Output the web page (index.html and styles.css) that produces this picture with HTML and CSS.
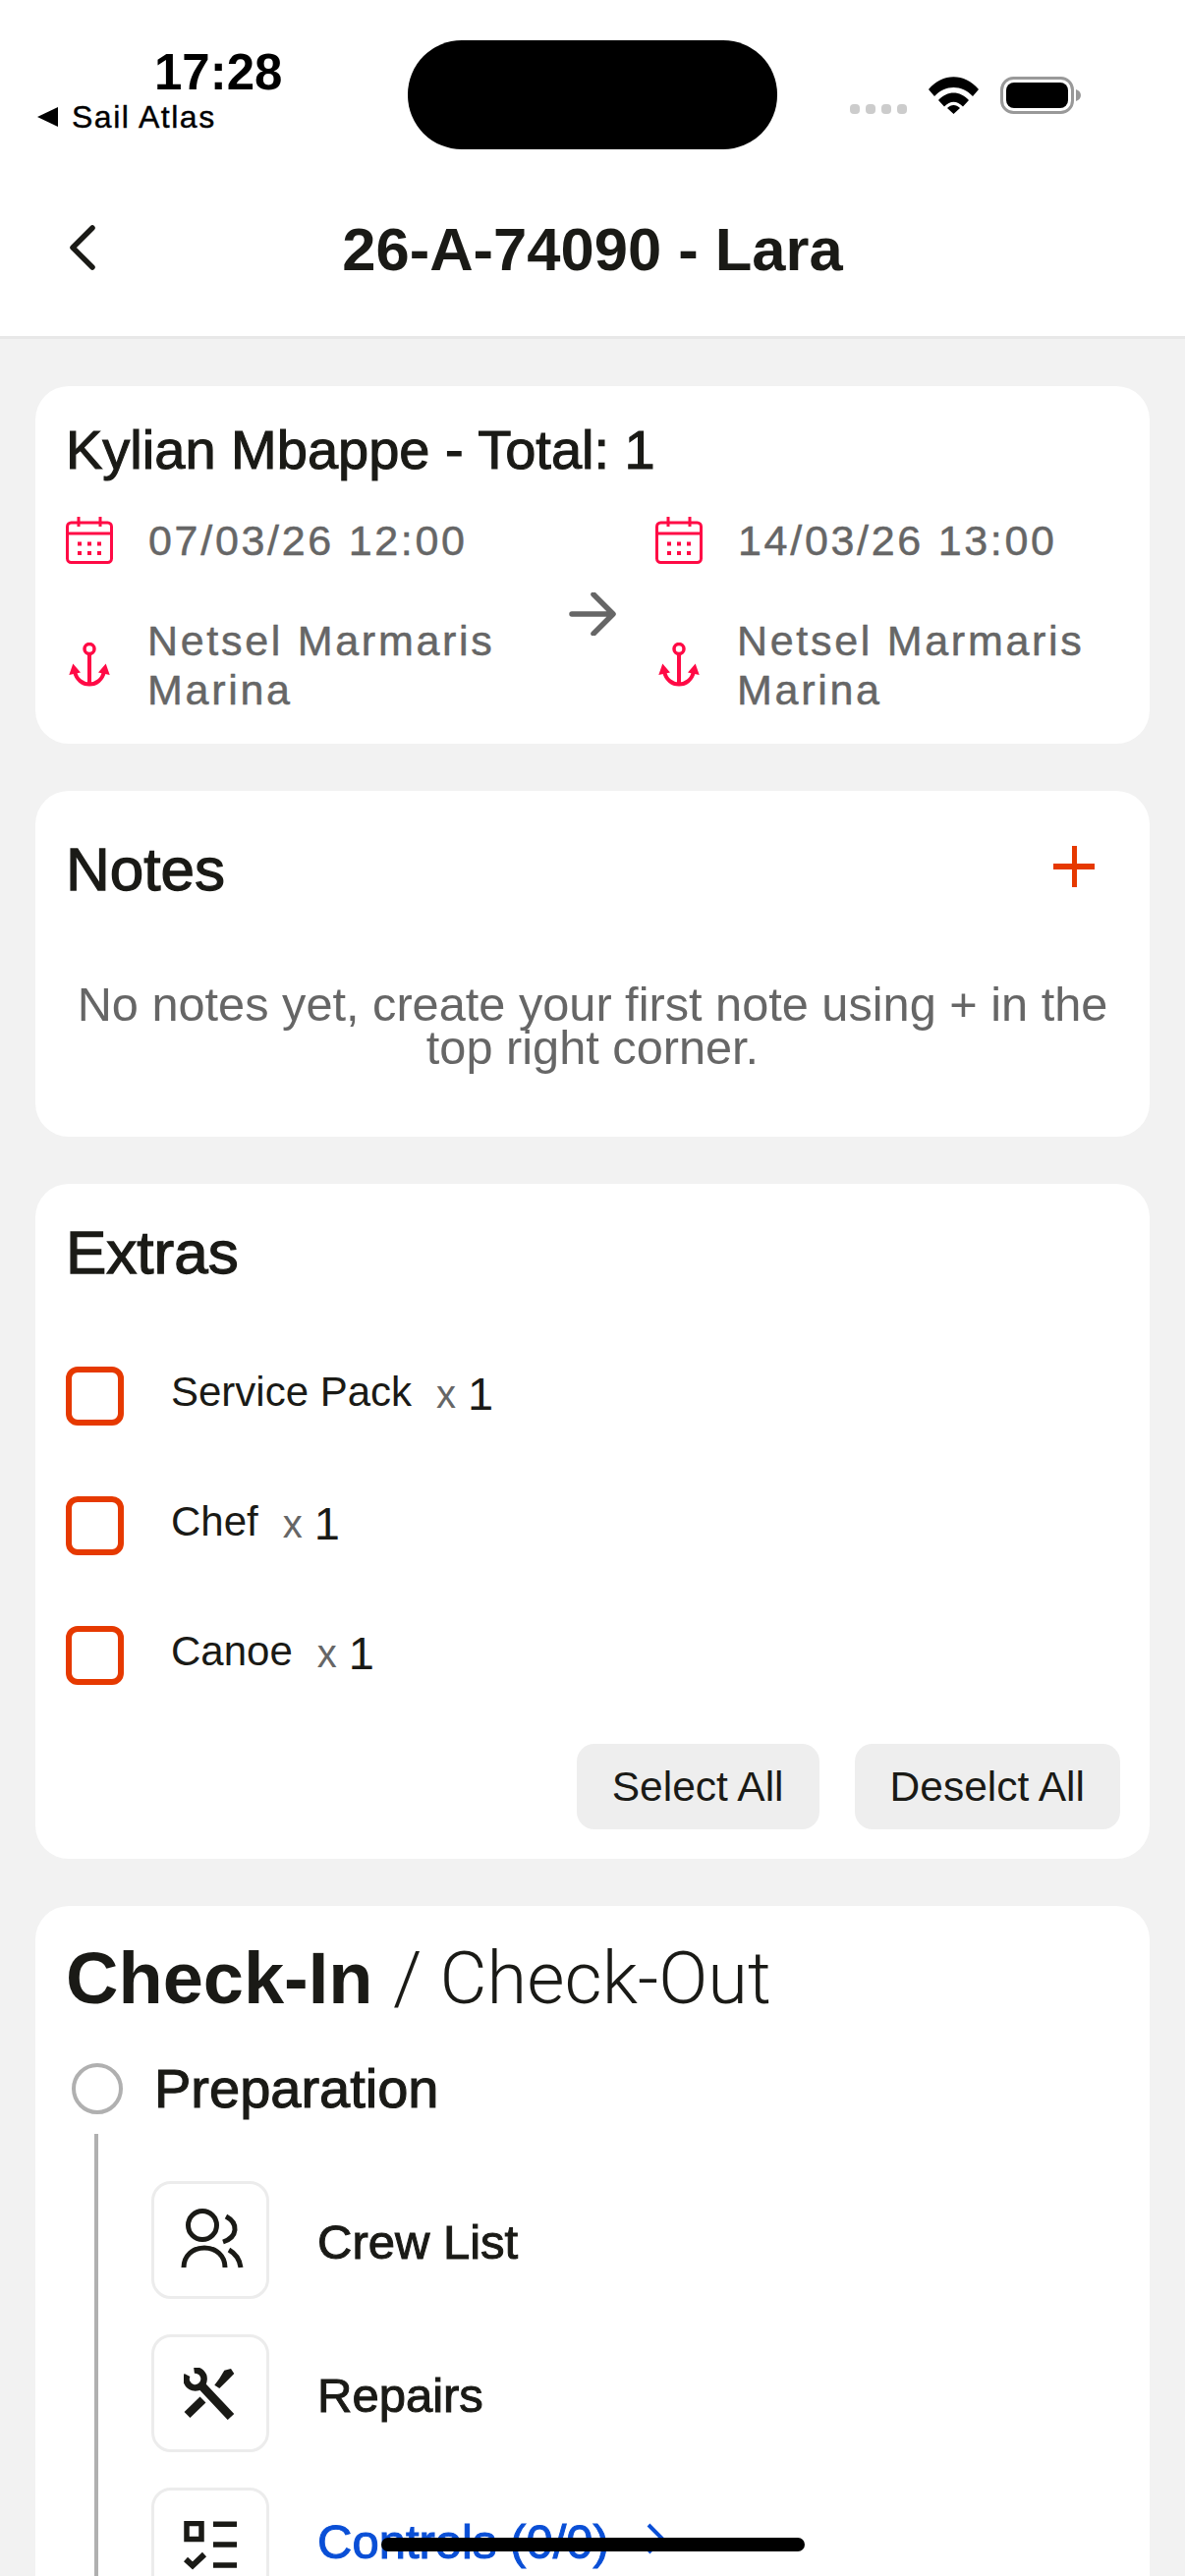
FILE: index.html
```html
<!DOCTYPE html>
<html lang="en">
<head>
    <meta charset="UTF-8">
    <meta name="viewport" content="width=device-width, initial-scale=1.0">
    <title>26-A-74090 - Lara</title>
    <link rel="stylesheet" href="styles.css">
</head>
<body>
    <header class="top">
        <div class="status">
            <div class="status-left">
                <div class="time">17:28</div>
                <div class="back-app"><span class="back-tri"></span>Sail Atlas</div>
            </div>
            <div class="island"></div>
            <div class="status-right">
                <div class="signal"><i></i><i></i><i></i><i></i></div>
                <svg class="wifi" viewBox="0 0 51 38"><path d="M0 13 C14 -4 37 -4 51 13 L45 20 C34 8 17 8 6 20Z M10 24 C19 14 32 14 41 24 L35 30.500 C29 24 22 24 16 30.500Z M19 32 C23 28 28 28 32 32 L25.500 38Z" fill="#000"/></svg>
                <svg class="battery" viewBox="0 0 82 38"><rect x="1.500" y="1.500" width="72" height="35" rx="12" fill="none" stroke="#999" stroke-width="3"/><rect x="6" y="6" width="63" height="26" rx="8" fill="#000"/><path d="M77 13 C80 14 82 16 82 19 C82 22 80 24 77 25Z" fill="#999"/></svg>
            </div>
        </div>
        <div class="nav">
            <svg class="nav-back" viewBox="0 0 27 46"><path d="M24 3 L4 23 L24 43" fill="none" stroke="#1a1a16" stroke-width="5.500" stroke-linecap="round" stroke-linejoin="round"/></svg>
            <h1 class="nav-title">26-A-74090 - Lara</h1>
        </div>
    </header>

    <main class="content">
        <section class="card card-trip">
            <h2 class="trip-title">Kylian Mbappe - Total: 1</h2>
            <div class="trip-grid">
                <div class="trip-col">
                    <div class="trip-row">
                        <svg class="ico-cal" viewBox="0 0 48 48"><use href="#cal"/></svg>
                        <span>07/03/26 12:00</span>
                    </div>
                    <div class="trip-row trip-place">
                        <svg class="ico-anchor" viewBox="0 0 42 46"><use href="#anchor"/></svg>
                        <span>Netsel Marmaris Marina</span>
                    </div>
                </div>
                <svg class="trip-arrow" viewBox="0 0 48 44"><path d="M3 22 H44 M25 2 L45 22 L25 42" fill="none" stroke="#666" stroke-width="5.500" stroke-linecap="round" stroke-linejoin="round"/></svg>
                <div class="trip-col">
                    <div class="trip-row">
                        <svg class="ico-cal" viewBox="0 0 48 48"><use href="#cal"/></svg>
                        <span>14/03/26 13:00</span>
                    </div>
                    <div class="trip-row trip-place">
                        <svg class="ico-anchor" viewBox="0 0 42 46"><use href="#anchor"/></svg>
                        <span>Netsel Marmaris Marina</span>
                    </div>
                </div>
            </div>
        </section>

        <section class="card card-notes">
            <div class="notes-head">
                <h2 class="card-title">Notes</h2>
                <span class="plus"></span>
            </div>
            <p class="notes-empty">No notes yet, create your first note using + in the top right corner.</p>
        </section>

        <section class="card card-extras">
            <h2 class="card-title">Extras</h2>
            <ul class="extras">
                <li class="extra"><span class="check"></span><span class="extra-name">Service Pack</span><span class="extra-x">x</span><span class="extra-n">1</span></li>
                <li class="extra"><span class="check"></span><span class="extra-name">Chef</span><span class="extra-x">x</span><span class="extra-n">1</span></li>
                <li class="extra"><span class="check"></span><span class="extra-name">Canoe</span><span class="extra-x">x</span><span class="extra-n">1</span></li>
            </ul>
            <div class="extras-actions">
                <button class="btn">Select All</button>
                <button class="btn">Deselct All</button>
            </div>
        </section>

        <section class="card card-check">
            <h2 class="check-title"><b>Check-In</b> <span>/ Check-Out</span></h2>
            <div class="step-head">
                <span class="step-dot"></span>
                <span class="step-name">Preparation</span>
            </div>
            <div class="step-items">
                <div class="item">
                    <div class="tile">
                        <svg class="tile-ico" viewBox="-2 -4 68 68" fill="none" stroke="#1a1a16" stroke-width="5"><circle cx="24" cy="15" r="14.500"/><path d="M5 58 C5 46 14 38 26 38 C38 38 47 46 47 58"/><path d="M48 6 C61 13 60 27 45 32"/><path d="M51 40 C58 44 62 50 63 58"/></svg>
                    </div>
                    <span class="item-name">Crew List</span>
                </div>
                <div class="item">
                    <div class="tile">
                        <svg class="tile-ico tile-ico-sm" viewBox="0 0 54 53" fill="none" stroke="#1a1a16"><path d="M3.500 7.500 A9 9 0 1 0 10.500 2.500" stroke-width="6.500"/><path d="M16 16 L48 50" stroke-width="9"/><path d="M3.500 48 L19.500 32.500" stroke-width="8.500"/><path d="M31.300 17.700 L36.300 11 L41.300 2.700 L48 1 L51.300 6 L44.700 12.700 L36.300 21Z" fill="#1a1a16" stroke="none"/></svg>
                    </div>
                    <span class="item-name">Repairs</span>
                </div>
                <div class="item">
                    <div class="tile">
                        <svg class="tile-ico tile-ico-sm" viewBox="0 0 54 53" fill="none" stroke="#1a1a16" stroke-width="5.500"><rect x="3" y="2.500" width="15" height="16"/><path d="M30 3.200 H54 M30 24 H54 M30 45 H54"/><path d="M2 39 L9 45.500 L21 34" stroke-width="6"/></svg>
                    </div>
                    <span class="item-name item-link">Controls (0/0)</span>
                    <svg class="item-chev" viewBox="0 0 18 32"><path d="M2 2 L16 16 L2 30" fill="none" stroke="#0a4fd6" stroke-width="4"/></svg>
                </div>
            </div>
        </section>
    </main>

    <div class="home-bar"></div>

    <svg class="defs" width="0" height="0">
        <defs>
            <g id="cal">
                <rect x="1.500" y="6" width="45" height="40.500" rx="4" fill="none" stroke="#ff0a45" stroke-width="3"/>
                <path d="M1.500 17 H46.500 M13 0 V10 M35 0 V10" fill="none" stroke="#ff0a45" stroke-width="3"/>
                <path d="M12 25.500h4v4h-4z M22 25.500h4v4h-4z M32 25.500h4v4h-4z M12 35h4v4h-4z M22 35h4v4h-4z M32 35h4v4h-4z" fill="#ff0a45"/>
            </g>
            <g id="anchor">
                <circle cx="21" cy="6.500" r="5" fill="none" stroke="#ff0a45" stroke-width="3.500"/>
                <path d="M21 12 V44 M6 29 C9 47 33 47 36 29" fill="none" stroke="#ff0a45" stroke-width="4"/>
                <path d="M0.300 33 L4.300 21.500 L12 30.500Z M41.700 33 L37.700 21.500 L30 30.500Z" fill="#ff0a45"/>
            </g>
        </defs>
    </svg>
</body>
</html>
```

FILE: styles.css
```css
* {
    box-sizing: border-box;
}

html, body {
    height: 2622px;
    overflow: hidden;
}

body {
    margin: 0;
    font-family: "Liberation Sans", Arial, sans-serif;
    background-color: #f2f2f2;
    color: #1a1a16;
}

h1, h2, p, ul {
    margin: 0;
    padding: 0;
}

.top {
    background-color: #fff;
    height: 345px;
    border-bottom: 3px solid #e8e8e8;
}

.status {
    display: flex;
    height: 190px;
}

.status-left {
    width: 415px;
    padding-top: 45px;
    padding-left: 38px;
}

.time {
    font-size: 51px;
    font-weight: bold;
    line-height: 58px;
    padding-left: 119px;
    color: #000;
}

.back-app {
    display: flex;
    align-items: center;
    font-size: 32px;
    line-height: 32px;
    letter-spacing: 1.500px;
    color: #000;
    -webkit-text-stroke: 0.4px #000;
}

.back-tri {
    width: 0;
    height: 0;
    margin-right: 14px;
    border-top: 10px solid transparent;
    border-bottom: 10px solid transparent;
    border-right: 21px solid #000;
}

.island {
    width: 376px;
    height: 111px;
    margin-top: 41px;
    background-color: #000;
    border-radius: 55px;
}

.status-right {
    display: flex;
    align-items: flex-end;
    height: 116px;
    padding-left: 74px;
}

.signal {
    display: flex;
    gap: 6px;
}

.signal i {
    display: block;
    width: 10px;
    height: 10px;
    border-radius: 4px;
    background-color: #ccc;
}

.wifi {
    width: 51px;
    height: 38px;
    margin-left: 22px;
}

.battery {
    width: 82px;
    height: 38px;
    margin-left: 22px;
}

.nav {
    position: relative;
    display: flex;
    align-items: center;
    justify-content: center;
    height: 105px;
    margin-top: 2px;
}

.nav-back {
    position: absolute;
    left: 70px;
    top: 37px;
    width: 27px;
    height: 46px;
}

.nav-title {
    font-size: 61.500px;
    font-weight: bold;
    line-height: 70px;
    margin-top: 18px;
}

.content {
    display: flex;
    flex-direction: column;
    gap: 48px;
    padding: 48px 36px 0;
}

.card {
    background-color: #fff;
    border-radius: 34px;
    padding: 0 31px;
}

.card-title {
    font-size: 62px;
    font-weight: normal;
    line-height: 70px;
    -webkit-text-stroke: 1.300px #1a1a16;
}

.card-trip {
    height: 364px;
    padding-top: 34px;
}

.trip-title {
    font-size: 56px;
    font-weight: normal;
    line-height: 62px;
    -webkit-text-stroke: 1.100px #1a1a16;
}

.trip-grid {
    display: flex;
    margin-top: 37px;
}

.trip-col {
    width: 513px;
}

.trip-col:last-child {
    width: 440px;
}

.trip-row {
    display: flex;
    align-items: center;
    gap: 36px;
    height: 48px;
    font-size: 43px;
    line-height: 50px;
    letter-spacing: 2.700px;
    color: #666;
    -webkit-text-stroke: 0.5px #666;
}

.trip-place {
    height: 100px;
    margin-top: 53px;
}

.ico-cal {
    flex: none;
    width: 48px;
    height: 48px;
}

.ico-anchor {
    flex: none;
    width: 42px;
    height: 46px;
    margin-left: 3px;
    margin-right: 2px;
}

.trip-arrow {
    flex: none;
    width: 48px;
    height: 44px;
    margin-left: -1px;
    margin-top: 77px;
    margin-right: 40px;
}

.card-notes {
    height: 352px;
}

.notes-head {
    display: flex;
    justify-content: space-between;
    align-items: center;
    padding-top: 45px;
}

.plus {
    position: relative;
    width: 42px;
    height: 42px;
    margin-right: 25px;
    margin-top: -6px;
}

.plus::before,
.plus::after {
    content: "";
    position: absolute;
    background-color: #e63900;
}

.plus::before {
    left: 0;
    right: 0;
    top: 18px;
    height: 6px;
}

.plus::after {
    top: 0;
    bottom: 0;
    left: 19px;
    width: 5px;
}

.notes-empty {
    margin-top: 80px;
    font-size: 48.700px;
    line-height: 44px;
    text-align: center;
    color: #666;
}

.card-extras {
    height: 687px;
    padding-top: 35px;
}

.extras {
    list-style: none;
    margin-top: 81px;
}

.extra {
    display: flex;
    align-items: flex-end;
    height: 60px;
    margin-bottom: 72px;
    font-size: 42px;
}

.check {
    flex: none;
    width: 59px;
    height: 60px;
    border: 6px solid #e63900;
    border-radius: 12px;
    margin-right: 48px;
}

.extra-name {
    line-height: 50px;
    padding-bottom: 9px;
}

.extra-x {
    font-size: 40px;
    line-height: 50px;
    padding-bottom: 7px;
    margin-left: 25px;
    color: #666;
}

.extra-n {
    font-size: 47px;
    line-height: 50px;
    padding-bottom: 7px;
    margin-left: 12px;
}

.extras-actions {
    display: flex;
    justify-content: flex-end;
    gap: 36px;
    margin-top: -12px;
    margin-right: -1px;
}

.btn {
    height: 87px;
    padding: 0 36px;
    border: none;
    border-radius: 18px;
    background-color: #eee;
    font-family: inherit;
    font-size: 42.500px;
    color: #1a1a16;
}

.card-check {
    height: 800px;
    padding-top: 32px;
}

.check-title {
    font-size: 74px;
    font-weight: normal;
    line-height: 84px;
}

.check-title b {
    font-weight: bold;
}

.check-title span {
    font-family: Roboto, sans-serif;
    font-weight: 300;
}

.step-head {
    display: flex;
    align-items: center;
    margin-top: 44px;
    padding-left: 6px;
}

.step-dot {
    width: 52px;
    height: 52px;
    border: 4px solid #b0b0b0;
    border-radius: 50%;
    margin-right: 32px;
}

.step-name {
    font-size: 56px;
    line-height: 52px;
    -webkit-text-stroke: 1.100px #1a1a16;
}

.step-items {
    margin-top: 20px;
    margin-left: 29px;
    padding-top: 48px;
    padding-left: 54px;
    border-left: 4px solid #b0b0b0;
}

.item {
    display: flex;
    align-items: center;
    margin-bottom: 36px;
}

.tile {
    display: flex;
    align-items: center;
    justify-content: center;
    flex: none;
    width: 120px;
    height: 120px;
    border: 3px solid #ececec;
    border-radius: 20px;
    margin-right: 49px;
}

.tile-ico {
    width: 68px;
    height: 68px;
}

.tile-ico-sm {
    width: 54px;
    height: 53px;
}

.item-name {
    font-size: 49px;
    line-height: 60px;
    padding-top: 4px;
    -webkit-text-stroke: 1px #1a1a16;
}

.item-link {
    margin-bottom: 14px;
    color: #0a4fd6;
    -webkit-text-stroke: 1px #0a4fd6;
}

.item-chev {
    width: 18px;
    height: 32px;
    margin-left: 38px;
    margin-bottom: 16px;
}

.home-bar {
    position: absolute;
    left: 388px;
    top: 2583px;
    width: 431px;
    height: 14px;
    border-radius: 7px;
    background-color: #000;
}

.defs {
    position: absolute;
}
```
